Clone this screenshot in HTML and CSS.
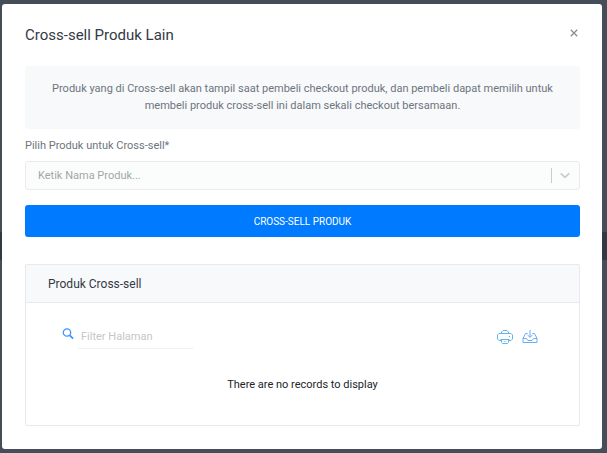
FILE: index.html
```html
<!DOCTYPE html>
<html lang="id">
<head>
<meta charset="utf-8">
<meta name="viewport" content="width=device-width, initial-scale=1">
<title>Cross-sell Produk Lain</title>
<link rel="stylesheet" href="styles.css">
</head>
<body>
<main class="modal" role="dialog" aria-labelledby="modal-title">
  <header class="modal-header">
    <h1 class="modal-title" id="modal-title">Cross-sell Produk Lain</h1>
    <button class="close" type="button" aria-label="Tutup">
      <svg width="8" height="8" viewBox="0 0 8 8"><path d="M.8.8l6.4 6.4M7.200.8L.8 7.200" fill="none" stroke="currentColor" stroke-width="1.300"/></svg>
    </button>
  </header>
  <p class="notice">Produk yang di Cross-sell akan tampil saat pembeli checkout produk, dan pembeli dapat memilih untuk membeli produk cross-sell ini dalam sekali checkout bersamaan.</p>
  <form class="picker">
    <label class="label" for="product">Pilih Produk untuk Cross-sell*</label>
    <div class="select-box">
      <select class="select" id="product">
        <option>Ketik Nama Produk...</option>
      </select>
      <span class="indicator">
        <svg width="14" height="15" viewBox="0 0 14 15"><path d="M3.300 5.800L7 9.300l3.700-3.500" fill="none" stroke="currentColor" stroke-width="1.800" stroke-linecap="round" stroke-linejoin="round"/></svg>
      </span>
    </div>
    <button class="submit" type="button">CROSS-SELL PRODUK</button>
  </form>
  <section class="card">
    <h2 class="card-header">Produk Cross-sell</h2>
    <div class="card-body">
      <div class="toolbar">
        <label class="search-icon" for="filter" aria-label="Filter Halaman">
          <svg width="12" height="12" viewBox="0 0 12 12"><g fill="none" stroke="currentColor"><circle cx="5" cy="4.500" r="3.700" stroke-width="1.300"/><path d="M7.700 7.300l3.400 3.400" stroke-width="1.700"/></g></svg>
        </label>
        <input class="filter" id="filter" type="text" placeholder="Filter Halaman">
        <button class="tool print" type="button" aria-label="Cetak">
          <svg width="16" height="14" viewBox="0 0 16 14"><g fill="none" stroke="currentColor"><path d="M4.500 3.500v-1.500L6 .5h4l1.500 1.500v1.500M4 10.500H2L.5 9V5L2 3.500h12L15.500 5v4L14 10.500h-2"/><path d="M3.500 9.500h9M4.500 9.500v3l1 1h5l1-1v-3"/><path d="M6.500 11.500h3" opacity=".5"/></g><circle cx="12.500" cy="6.500" r=".7" fill="currentColor"/></svg>
        </button>
        <button class="tool export" type="button" aria-label="Unduh">
          <svg width="16" height="14" viewBox="0 0 16 14"><g fill="none" stroke="currentColor"><path d="M5.500 3.500H3.500L1 8.500v4h14V8.500L12.500 3.500h-2M1 8.500h3.500l1.500 2h4l1.500-2h3.500"/><path d="M8 0v7M5.500 5L8 7.300 10.500 5"/></g></svg>
        </button>
      </div>
      <p class="empty">There are no records to display</p>
    </div>
  </section>
</main>
</body>
</html>
```
FILE: styles.css
```css
* {
  box-sizing: border-box;
}

body {
  margin: 0;
  padding: 4px 5px 4px 2px;
  min-height: 100vh;
  display: flex;
  background: linear-gradient(#454d59 0 232px, #323944 232px 260px, #454d59 260px);
  font-family: Roboto, "Liberation Sans", sans-serif;
  font-size: 11px;
  line-height: 17px;
  color: #6c757d;
}

button,
input,
select {
  font: inherit;
}

svg {
  display: block;
}

.modal {
  flex: 1;
  min-width: 0;
  padding: 20px 22px 23px 23px;
  border-radius: 3px;
  background: #fff;
}

.modal-header {
  display: flex;
  justify-content: space-between;
  align-items: flex-start;
  margin-bottom: 20px;
}

.modal-title {
  margin: 0;
  font-size: 15px;
  line-height: 22px;
  font-weight: 400;
  color: #343a46;
}

.close {
  margin: 3px 0 0;
  padding: 2px;
  border: 0;
  background: none;
  color: #8c8c8c;
}

.notice {
  margin: 0 0 8px;
  padding: 14px 24px 15px;
  border-radius: 3px;
  background: #f8f9fb;
  text-align: center;
}

.picker {
  display: flex;
  flex-direction: column;
}

.label {
  margin-bottom: 7px;
}

.select-box {
  display: flex;
  align-items: center;
  height: 29px;
  margin-bottom: 15px;
  border: 1px solid #ebebeb;
  border-radius: 3px;
  background: #fbfdfc;
}

.select {
  flex: 1;
  min-width: 0;
  height: 27px;
  padding: 0 12px;
  border: 0;
  background: none;
  appearance: none;
  color: #a3a6a5;
}

.indicator {
  padding: 0 7px 0 6px;
  border-left: 1px solid #ccc;
  color: #ccc;
}

.submit {
  height: 32px;
  padding: 0 12px;
  border: 0;
  border-radius: 3px;
  background: #007bff;
  color: #fff;
  font-size: 10px;
}

.card {
  margin-top: 27px;
  border: 1px solid #e7eaed;
  border-radius: 2px;
}

.card-header {
  margin: 0;
  padding: 11px 22px 9px;
  border-bottom: 1px solid #e7eaed;
  background: #f8f9fb;
  font-size: 12px;
  line-height: 17px;
  font-weight: 400;
  color: #343a46;
}

.card-body {
  padding: 22px 36px 32px;
}

.toolbar {
  display: flex;
  align-items: center;
  gap: 9px;
  height: 24px;
}

.search-icon {
  margin-right: -5px;
  padding-bottom: 6px;
  color: #3a94ff;
}

.filter {
  width: 115px;
  height: 24px;
  margin-right: auto;
  padding: 0 3px;
  border: 0;
  border-bottom: 1px solid #f0f0f0;
  background: none;
}

.filter::placeholder {
  color: #c6c6c6;
  opacity: 1;
}

.tool {
  padding: 0;
  border: 0;
  background: none;
}

.print {
  color: #62b5e5;
}

.export {
  color: #6aabfa;
  margin-right: 5px;
}

.empty {
  margin: 27px 0 0;
  text-align: center;
  color: #212529;
}
```
